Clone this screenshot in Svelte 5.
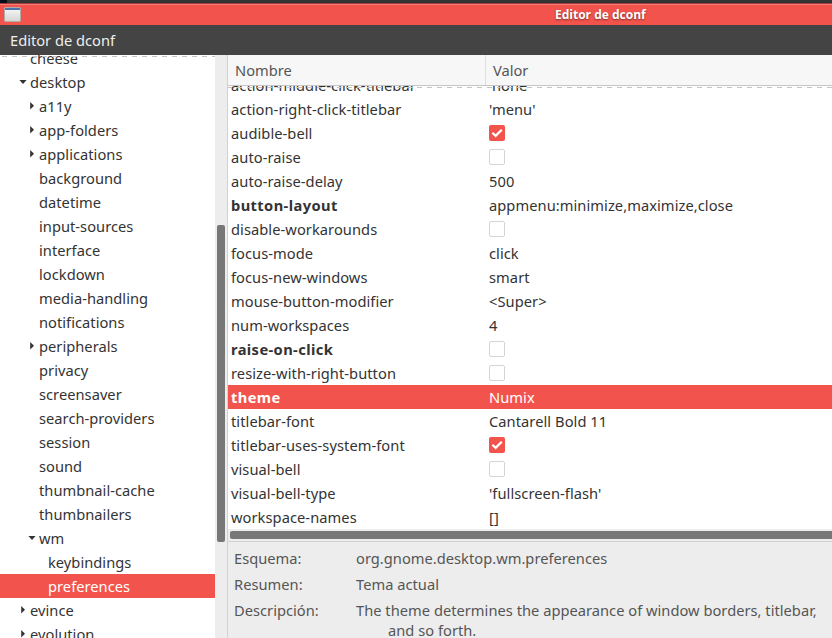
<script>
  const tree = [
    ['cheese', 1, ''], ['desktop', 1, 'open'], ['a11y', 2, 'closed'], ['app-folders', 2, 'closed'],
    ['applications', 2, 'closed'], ['background', 2, ''], ['datetime', 2, ''], ['input-sources', 2, ''],
    ['interface', 2, ''], ['lockdown', 2, ''], ['media-handling', 2, ''], ['notifications', 2, ''],
    ['peripherals', 2, 'closed'], ['privacy', 2, ''], ['screensaver', 2, ''], ['search-providers', 2, ''],
    ['session', 2, ''], ['sound', 2, ''], ['thumbnail-cache', 2, ''], ['thumbnailers', 2, ''],
    ['wm', 2, 'open'], ['keybindings', 3, ''], ['preferences', 3, ''], ['evince', 1, 'closed'], ['evolution', 1, 'closed']
  ];
  const keys = [
    ['action-middle-click-titlebar', "'none'"], ['action-right-click-titlebar', "'menu'"],
    ['audible-bell', true], ['auto-raise', false], ['auto-raise-delay', '500'],
    ['button-layout', 'appmenu:minimize,maximize,close', true], ['disable-workarounds', false],
    ['focus-mode', 'click'], ['focus-new-windows', 'smart'], ['mouse-button-modifier', '<Super>'],
    ['num-workspaces', '4'], ['raise-on-click', false, true], ['resize-with-right-button', false],
    ['theme', 'Numix', true], ['titlebar-font', 'Cantarell Bold 11'], ['titlebar-uses-system-font', true],
    ['visual-bell', false], ['visual-bell-type', "'fullscreen-flash'"], ['workspace-names', '[]']
  ];
  let node = $state('preferences');
  let selected = $state('theme');
</script>

<div class="window">
  <div class="desktop-edge"></div>
  <header class="titlebar">
    <svg class="app-icon" width="18" height="16" viewBox="0 0 18 16">
      <defs><linearGradient id="paper" x2="0" y2="1"><stop stop-color="#fafafa" /><stop offset="1" stop-color="#d3d5d1" /></linearGradient></defs>
      <rect x=".5" y=".5" width="16" height="14" rx="1" fill="url(#paper)" stroke="#b5aaa6" />
      <path d="M1 1h15v2H1z" fill="#4a74ad" />
    </svg>
    <span class="title">Editor de dconf</span>
  </header>
  <nav class="menubar">Editor de dconf</nav>
  <main>
    <aside class="tree">
      <div class="nodes">
        {#each tree as [name, depth, state]}
          <button class="node" class:selected={node === name} style="padding-left:{depth * 9 + 9}px" onclick={() => (node = name)}>
            <span class="arrow">
              {#if state === 'open'}
                <svg width="8" height="8" viewBox="0 0 8 8"><path d="M.4 2h7.2L4 5.9z" /></svg>
              {:else if state === 'closed'}
                <svg width="8" height="8" viewBox="0 0 8 8"><path d="M2.2 0v7.6L6 3.8z" /></svg>
              {/if}
            </span>{name}
          </button>
        {/each}
      </div>
      <div class="vscroll"><div class="thumb"></div></div>
      <div class="overflow-mark"></div>
    </aside>
    <section class="content">
      <div class="head"><div class="col-name">Nombre</div><div class="col-value">Valor</div></div>
      <div class="keys">
        {#each keys as [name, value, changed]}
          <button class="row" class:selected={selected === name} onclick={() => (selected = name)}>
            <span class="name" class:changed>{name}</span>
            {#if typeof value === 'boolean'}
              <span class="check" class:on={value}>
                {#if value}<svg width="16" height="16" viewBox="0 0 16 16"><path d="M3.4 7.7l3.2 3.2 6.2-6.2" fill="none" stroke="#fff" stroke-width="2.2" /></svg>{/if}
              </span>
            {:else}<span>{value}</span>{/if}
          </button>
        {/each}
        <div class="overflow-mark"></div>
      </div>
      <div class="hscroll"><div class="thumb"></div></div>
      <dl class="details">
        <dt>Esquema:</dt><dd>org.gnome.desktop.wm.preferences</dd>
        <dt>Resumen:</dt><dd>Tema actual</dd>
        <dt>Descripción:</dt><dd>The theme determines the appearance of window borders, titlebar,<br /><span class="indent">and so forth.</span></dd>
      </dl>
    </section>
  </main>
</div>

<style>
  :global(body) { margin: 0; overflow: hidden; }
  .window { width: 832px; height: 638px; overflow: hidden; display: flex; flex-direction: column; background: #fff; color: #333; font: 14.67px/24px 'Noto Sans', sans-serif; }
  .desktop-edge { height: 3px; flex: none; background: linear-gradient(90deg, #080c18 7px, #343434 7px); }
  .titlebar { height: 22px; flex: none; box-sizing: border-box; border-top: 1px solid #a03b37; background: #f2544d; box-shadow: inset 0 1px #f47e79; display: flex; align-items: flex-start; }
  .app-icon { margin: 3px 0 0 4px; }
  .title { margin-left: 533px; color: #fff; font: bold 12px/21px 'Open Sans', sans-serif; text-shadow: 0 1px 2px #7b302d; white-space: nowrap; }
  .menubar { height: 30px; flex: none; padding-left: 10px; line-height: 31px; background: #444; color: #eee; }
  main { flex: 1; min-height: 0; display: flex; }
  button { font: inherit; color: inherit; letter-spacing: inherit; background: none; border: 0; padding: 0; margin: 0; text-align: left; white-space: nowrap; }
  .tree { width: 227px; flex: none; display: flex; position: relative; overflow: hidden; letter-spacing: .03px; }
  .nodes { width: 215px; margin-top: -9px; }
  .node { display: flex; align-items: center; width: 100%; height: 24px; box-sizing: border-box; }
  .arrow { width: 12px; height: 8px; display: block; line-height: 0; fill: #333; }
  .arrow svg { margin-left: 1px; }
  .selected { background: #f2544d; color: #fff; }
  .vscroll { width: 12px; background: #ededed; box-sizing: border-box; padding: 170px 2px 0; }
  .vscroll .thumb { height: 317px; border-radius: 2px; background: #777; }
  .overflow-mark { position: absolute; top: 1px; left: 0; width: 215px; height: 1px; background: repeating-linear-gradient(90deg, transparent 0 2px, #c4c4c4 2px 7px, transparent 7px 10px); }
  .content { flex: 1; min-width: 0; border-left: 1px solid #d2d2d2; display: flex; flex-direction: column; }
  .head { height: 31px; flex: none; box-sizing: border-box; border-bottom: 1px solid #c6c6c6; background: #f7f7f7; color: #555; display: flex; line-height: 31px; }
  .col-name { width: 250px; padding-left: 7px; border-right: 1px solid #e0e0e0; }
  .col-value { padding-left: 7px; }
  .keys { height: 443px; flex: none; overflow: hidden; position: relative; letter-spacing: .06px; }
  .row { display: flex; align-items: center; width: 100%; height: 24px; padding-left: 3px; }
  .row:first-child { margin-top: -13px; }
  .name { width: 258px; flex: none; }
  .changed { font-weight: bold; letter-spacing: .4px; }
  .check { width: 16px; height: 16px; box-sizing: border-box; border: 1px solid #d5d5d5; border-radius: 2px; margin-top: -1px; background: #fff; line-height: 0; }
  .check.on { border: 0; background: #f2544d; }
  .keys .overflow-mark { left: -3px; width: 610px; }
  .hscroll { height: 13px; flex: none; box-sizing: border-box; padding: 2px 0 0 2px; background: #ededed; border-bottom: 1px solid #d2d2d2; }
  .hscroll .thumb { height: 8px; border-radius: 2px 0 0 2px; background: #777; }
  .details { flex: 1; margin: 0; padding: 6px 0 0 6px; background: #ededed; color: #555; display: grid; grid-template-columns: 122px 1fr; grid-auto-rows: max-content; row-gap: 6px; line-height: 20px; align-content: start; letter-spacing: .02px; }
  .details dd { margin: 0; white-space: nowrap; }
  .indent { margin-left: 32px; }
</style>
